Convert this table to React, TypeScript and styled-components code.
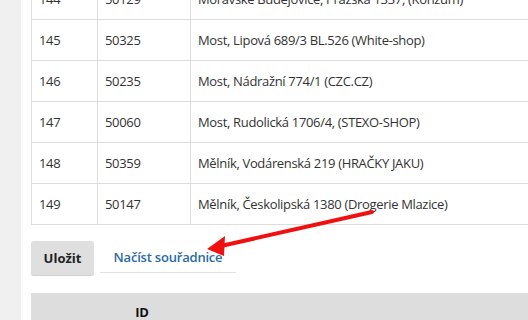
import React from "react";
import styled, { createGlobalStyle } from "styled-components";

const Global = createGlobalStyle`
  html, body { margin: 0; padding: 0; background: #fff; overflow: hidden; }
  body { font-family: "Open Sans", "Noto Sans", sans-serif; font-size: 13px; letter-spacing: -0.2px; color: #333; }
`;

const Page = styled.div`
  display: flex;
  width: 528px;
  height: 320px;
  overflow: hidden;
`;

const Sidebar = styled.div`
  flex: 0 0 21px;
  background: #f0f0f0;
`;

const Content = styled.div`
  flex: 1;
  padding-left: 10px;
  margin-top: -22px;
  overflow: hidden;
`;

const Table = styled.table`
  border-collapse: collapse;
  width: 640px;
  table-layout: fixed;
`;

const Cell = styled.td<{ $w?: number }>`
  border: 1px solid #ddd;
  height: 41px;
  padding: 0 7px;
  vertical-align: middle;
  white-space: nowrap;
  box-sizing: border-box;
  letter-spacing: -0.33px;
  ${(p) => (p.$w ? `width: ${p.$w}px;` : "")}
`;

const Actions = styled.div`
  display: flex;
  align-items: center;
  gap: 6px;
  margin: 16px 0 18px;
  position: relative;
`;

const SaveButton = styled.button`
  font: inherit;
  letter-spacing: 0;
  font-weight: 700;
  color: #222;
  background: #dfdfdf;
  border: none;
  border-radius: 3px;
  height: 34px;
  width: 63px;
  padding: 0;
  box-shadow: 0 1px 0 #d0d0d0;
`;

const LinkButton = styled.button`
  font: inherit;
  letter-spacing: inherit;
  font-weight: 600;
  color: #2a6aa6;
  background: #fff;
  border: none;
  border-bottom: 1px solid #e4e4e4;
  height: 32px;
  width: 136px;
  padding: 0;
  margin-top: -2px;
`;

const Arrow = styled.svg`
  position: absolute;
  left: 0;
  top: 0;
  overflow: visible;
  pointer-events: none;
`;

const Header = styled.div`
  display: grid;
  grid-template-columns: 222px 1fr;
  background: #ddd;
  height: 40px;
  font-weight: 700;
  color: #111;
`;

const HeaderCell = styled.div`
  text-align: center;
  padding-top: 10px;
`;

const rows = [
  ["144", "50129", "Moravské Budějovice, Pražská 1337, (Konzum)"],
  ["145", "50325", "Most, Lipová 689/3 BL.526 (White-shop)"],
  ["146", "50235", "Most, Nádražní 774/1 (CZC.CZ)"],
  ["147", "50060", "Most, Rudolická 1706/4, (STEXO-SHOP)"],
  ["148", "50359", "Mělník, Vodárenská 219 (HRAČKY JAKU)"],
  ["149", "50147", "Mělník, Českolipská 1380 (Drogerie Mlazice)"],
];

export default function App() {
  return (
    <>
      <Global />
      <Page>
        <Sidebar />
        <Content>
          <Table>
            <tbody>
              {rows.map((r) => (
                <tr key={r[0]}>
                  <Cell $w={66}>{r[0]}</Cell>
                  <Cell $w={93}>{r[1]}</Cell>
                  <Cell>{r[2]}</Cell>
                </tr>
              ))}
            </tbody>
          </Table>
          <Actions>
            <SaveButton>Uložit</SaveButton>
            <LinkButton>Načíst souřadnice</LinkButton>
            <Arrow width="1" height="1">
              <line x1="341" y1="-29" x2="190" y2="5" stroke="#f01010" strokeWidth="4" strokeLinecap="round" />
              <polygon points="176,8 194,-5 193,15" fill="#f01010" />
            </Arrow>
          </Actions>
          <Header>
            <HeaderCell>ID</HeaderCell>
            <HeaderCell />
          </Header>
        </Content>
      </Page>
    </>
  );
}
